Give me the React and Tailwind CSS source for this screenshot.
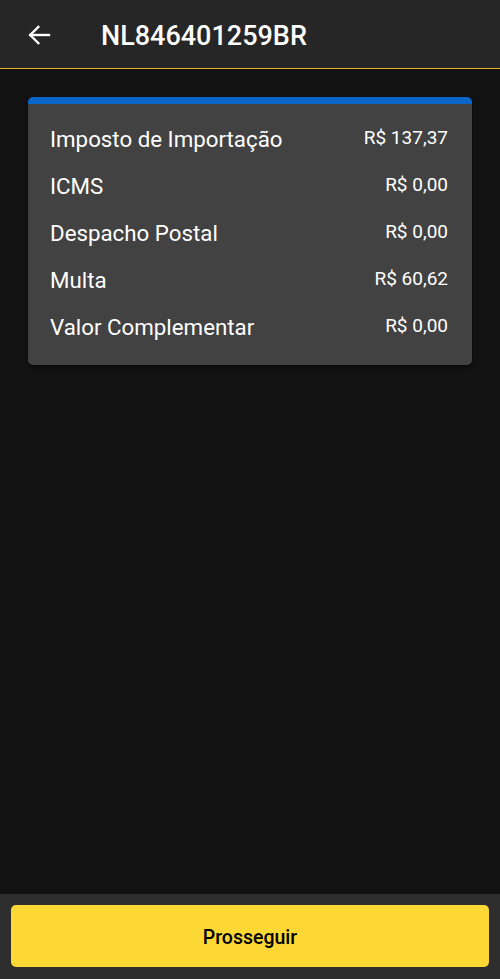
import React from "react";

const rows = [
  ["Imposto de Importação", "R$ 137,37"],
  ["ICMS", "R$ 0,00"],
  ["Despacho Postal", "R$ 0,00"],
  ["Multa", "R$ 60,62"],
  ["Valor Complementar", "R$ 0,00"],
];

export default function App() {
  return (
    <div
      className="w-[500px] h-[979px] bg-[#121212] flex flex-col text-white"
      style={{ fontFamily: "Roboto, 'Noto Sans', sans-serif" }}
    >
      <header className="h-[69px] shrink-0 bg-[#262626] border-b-[1.5px] border-[#e6b422] flex items-center">
        <div className="w-[101px] flex items-center pl-[24px] pt-[1px]">
          <svg width="30" height="30" viewBox="0 0 24 24" fill="none" stroke="white" strokeWidth="1.9" strokeLinecap="square">
            <path d="M20 12H5" />
            <path d="M11.5 5.5L5 12l6.5 6.5" />
          </svg>
        </div>
        <h1 className="text-[27px] font-medium leading-none pt-[4px]">NL846401259BR</h1>
      </header>

      <main className="flex-1 px-[28px] pt-[28px]">
        <div className="rounded-[5px] bg-[#424242] border-t-[7px] border-[#0a66c9] pt-[10px] pb-[16px] pl-[22px] pr-[24px] shadow-[0_2px_3px_rgba(0,0,0,0.5)]">
          {rows.map(([label, value]) => (
            <div key={label} className="h-[47px] flex items-center justify-between">
              <span className="text-[22.3px] leading-none pt-[4px]">{label}</span>
              <span className="text-[19px] leading-none">{value}</span>
            </div>
          ))}
        </div>
      </main>

      <footer className="h-[85px] shrink-0 bg-[#2e2e2e] px-[11px] pt-[11px]">
        <button className="w-full h-[62px] rounded-[5px] bg-[#fdd835] text-black text-[19.5px] font-medium flex items-center justify-center pt-[3px]">
          Prosseguir
        </button>
      </footer>
    </div>
  );
}
